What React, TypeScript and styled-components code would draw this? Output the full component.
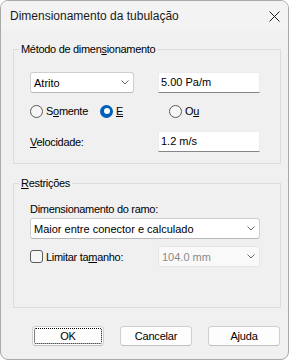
import React from 'react';
import styled, { createGlobalStyle } from 'styled-components';

const GlobalStyle = createGlobalStyle`
  * {
    box-sizing: border-box;
  }
  body {
    margin: 0;
    background: #fff;
    font-family: "Liberation Sans", Arial, sans-serif;
  }
`;

const Window = styled.div`
  width: 289px;
  height: 360px;
  border: 1px solid #a9a9a9;
  border-radius: 8px;
  background: #f0f0f0;
  overflow: hidden;
  display: flex;
  flex-direction: column;
`;

const TitleBar = styled.div`
  height: 30px;
  flex: none;
  display: flex;
  align-items: center;
  justify-content: space-between;
  padding: 0 8px 0 9px;
  background: #f3f3f3;
  font-size: 12px;
  color: #1a1a1a;
`;

const Body = styled.div`
  padding: 11px 0 0 12px;
`;

const Group = styled.fieldset<{ $top?: number }>`
  width: 268px;
  margin: ${({ $top }) => $top || 0}px 0 0 0;
  padding: 0 0 0 5px;
  border: 1px solid #dcdcdc;
  min-inline-size: 0;
`;

const Legend = styled.legend`
  padding: 0 2px;
  font-size: 11px;
  line-height: 14px;
  letter-spacing: -0.3px;
  color: #000;
`;

const GroupContent = styled.div<{ $pt: number; $pb: number }>`
  padding: ${({ $pt, $pb }) => `${$pt}px 0 ${$pb}px 11px`};
`;

const Row = styled.div<{ $top?: number }>`
  display: grid;
  grid-template-columns: 128px 102px;
  align-items: center;
  margin-top: ${({ $top }) => $top || 0}px;
`;

const Label = styled.div`
  font-size: 11px;
  line-height: 14px;
  letter-spacing: -0.3px;
  color: #000;
  white-space: nowrap;
`;

const Combo = styled.div<{ $w: number; $disabled?: boolean }>`
  width: ${({ $w }) => $w}px;
  height: 21px;
  display: flex;
  align-items: center;
  justify-content: space-between;
  padding: 0 4px 0 3px;
  border: 1px solid ${({ $disabled }) => ($disabled ? '#e6e6e6' : '#cfcfcf')};
  border-bottom-color: ${({ $disabled }) => ($disabled ? '#e6e6e6' : '#b9b9b9')};
  border-radius: 3px;
  background: ${({ $disabled }) => ($disabled ? '#f9f9f9' : '#fff')};
  font-size: 11px;
  color: ${({ $disabled }) => ($disabled ? '#8a8a8a' : '#000')};
  white-space: nowrap;
`;

const Edit = styled.div`
  width: 102px;
  height: 21px;
  padding: 2px 0 0 2px;
  background: #fff;
  border: 1px solid #ececec;
  border-bottom-color: #868686;
  font-size: 11px;
  line-height: 14px;
  color: #000;
`;

const RadioRow = styled.div`
  display: flex;
  align-items: center;
  height: 14px;
  margin-top: 11px;
`;

const RadioItem = styled.div<{ $w?: number }>`
  display: flex;
  align-items: center;
  gap: 3px;
  width: ${({ $w }) => ($w ? `${$w}px` : 'auto')};
`;

const RadioDot = styled.span<{ $checked?: boolean }>`
  width: 13px;
  height: 13px;
  border-radius: 50%;
  flex: none;
  position: relative;
  border: ${({ $checked }) => ($checked ? 'none' : '1px solid #5a5a5a')};
  background: ${({ $checked }) => ($checked ? '#005fb8' : '#f6f6f6')};

  &::after {
    content: '';
    display: ${({ $checked }) => ($checked ? 'block' : 'none')};
    position: absolute;
    left: 3.5px;
    top: 3.5px;
    width: 6px;
    height: 6px;
    border-radius: 50%;
    background: #fff;
  }
`;

const CheckBox = styled.span`
  width: 13px;
  height: 13px;
  flex: none;
  border: 1px solid #5a5a5a;
  border-radius: 3px;
  background: #f6f6f6;
`;

const CheckItem = styled.div`
  display: flex;
  align-items: center;
  gap: 3px;
`;

const U = styled.span`
  text-decoration: underline;
  text-underline-offset: 1px;
`;

const ButtonRow = styled.div`
  display: flex;
  gap: 16px;
  margin-top: 18px;
  padding-left: 19px;
`;

const Button = styled.button<{ $focused?: boolean }>`
  width: 72px;
  height: 20px;
  padding: 0;
  border: 1px solid #d0d0d0;
  border-bottom-color: #c0c0c0;
  border-radius: 4px;
  background: #fdfdfd;
  font-family: "Liberation Sans", Arial, sans-serif;
  font-size: 11px;
  letter-spacing: -0.2px;
  color: #000;
  outline: ${({ $focused }) => ($focused ? '1px dotted #000' : 'none')};
  outline-offset: -3px;
`;

const Chevron = () => (
  <svg width="8" height="5" viewBox="0 0 8 5">
    <polyline points="0.5,0.5 4,4 7.5,0.5" fill="none" stroke="#6a6a6a" strokeWidth="1" />
  </svg>
);

const CloseIcon = () => (
  <svg width="11" height="11" viewBox="0 0 11 11">
    <path d="M0.5 0.5 L10.5 10.5 M10.5 0.5 L0.5 10.5" stroke="#1f1f1f" strokeWidth="1" />
  </svg>
);

export default function App() {
  return (
    <>
      <GlobalStyle />
      <Window>
        <TitleBar>
          <span>Dimensionamento da tubulação</span>
          <CloseIcon />
        </TitleBar>
        <Body>
          <Group>
            <Legend>
              Método de dimen<U>s</U>ionamento
            </Legend>
            <GroupContent $pt={16} $pb={11}>
              <Row>
                <Combo $w={104}>
                  <span>Atrito</span>
                  <Chevron />
                </Combo>
                <Edit>5.00 Pa/m</Edit>
              </Row>
              <RadioRow>
                <RadioItem $w={70}>
                  <RadioDot />
                  <Label>
                    S<U>o</U>mente
                  </Label>
                </RadioItem>
                <RadioItem $w={69}>
                  <RadioDot $checked />
                  <Label>
                    <U>E</U>
                  </Label>
                </RadioItem>
                <RadioItem>
                  <RadioDot />
                  <Label>
                    O<U>u</U>
                  </Label>
                </RadioItem>
              </RadioRow>
              <Row $top={13}>
                <Label>
                  <U>V</U>elocidade:
                </Label>
                <Edit>1.2 m/s</Edit>
              </Row>
            </GroupContent>
          </Group>

          <Group $top={12}>
            <Legend>
              <U>R</U>estrições
            </Legend>
            <GroupContent $pt={12} $pb={40}>
              <Label>Dimensionamento do ramo:</Label>
              <div style={{ marginTop: 2 }}>
                <Combo $w={230}>
                  <span>Maior entre conector e calculado</span>
                  <Chevron />
                </Combo>
              </div>
              <Row $top={7}>
                <CheckItem>
                  <CheckBox />
                  <Label>
                    Limitar ta<U>m</U>anho:
                  </Label>
                </CheckItem>
                <Combo $w={102} $disabled>
                  <span>104.0 mm</span>
                  <Chevron />
                </Combo>
              </Row>
            </GroupContent>
          </Group>

          <ButtonRow>
            <Button $focused>OK</Button>
            <Button>Cancelar</Button>
            <Button>Ajuda</Button>
          </ButtonRow>
        </Body>
      </Window>
    </>
  );
}
